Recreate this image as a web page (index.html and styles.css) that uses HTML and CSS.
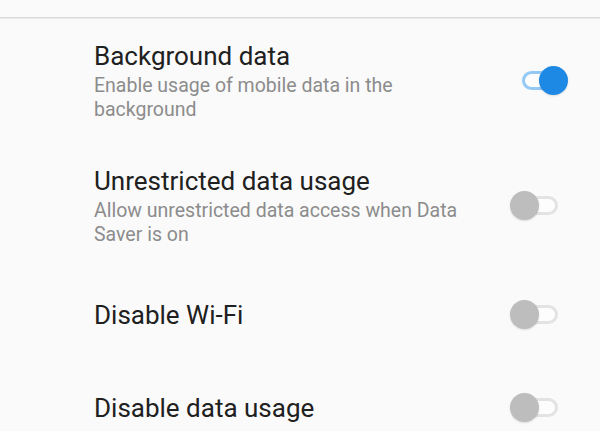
FILE: index.html
```html
<!DOCTYPE html>
<html lang="en">
<head>
  <meta charset="UTF-8" />
  <title>Data usage settings</title>
  <link rel="stylesheet" href="styles.css">
</head>
<body>

<div class="top-space"></div>

<!-- settings list -->
<div class="settings">
  <div class="row">
    <div class="text">
      <div class="title">Background data</div>
      <div class="summary">Enable usage of mobile data in the background</div>
    </div>
    <span class="switch on"><span class="thumb"></span></span>
  </div>

  <div class="row">
    <div class="text">
      <div class="title">Unrestricted data usage</div>
      <div class="summary">Allow unrestricted data access when Data Saver is on</div>
    </div>
    <span class="switch"><span class="thumb"></span></span>
  </div>

  <div class="row single">
    <div class="text">
      <div class="title">Disable Wi-Fi</div>
    </div>
    <span class="switch"><span class="thumb"></span></span>
  </div>

  <div class="row single">
    <div class="text">
      <div class="title">Disable data usage</div>
    </div>
    <span class="switch"><span class="thumb"></span></span>
  </div>
</div>

</body>
</html>
```

FILE: styles.css
```css
body {
  margin: 0;
  background-color: #fafafa;
  font-family: Roboto, "Noto Sans", sans-serif;
  overflow: hidden;
  height: 431px;
}

.top-space {
  height: 17px;
  border-bottom: 1px solid #d9d9d9;
  box-shadow: 0 1px 1px #ececec;
}

.row {
  display: flex;
  align-items: center;
  padding: 22px 32px 22px 94px;
  height: 125px;
  box-sizing: border-box;
}

.row.single {
  height: 93px;
}

.text {
  flex: 1;
  margin-right: 36px;
}

.title {
  font-size: 26px;
  line-height: 32px;
  color: #202020;
}

.summary {
  font-size: 19.5px;
  line-height: 24px;
  color: #8c8c8c;
  margin-top: 2px;
}

/* toggle switch */
.switch {
  position: relative;
  width: 58px;
  height: 29px;
  flex: none;
}

.switch::before {
  content: "";
  position: absolute;
  left: 12px;
  top: 5px;
  width: 36px;
  height: 19px;
  box-sizing: border-box;
  border: 3px solid #e3e3e3;
  border-radius: 10px;
  background-color: #fdfdfd;
}

.switch .thumb {
  position: absolute;
  left: 0;
  top: 0;
  width: 29px;
  height: 29px;
  border-radius: 50%;
  background-color: #bdbdbd;
  box-shadow: 0 1px 2px rgba(0, 0, 0, 0.12);
}

.switch.on::before {
  border-color: #93c9f4;
}

.switch.on .thumb {
  left: 29px;
  background-color: #1e88e5;
}
```
